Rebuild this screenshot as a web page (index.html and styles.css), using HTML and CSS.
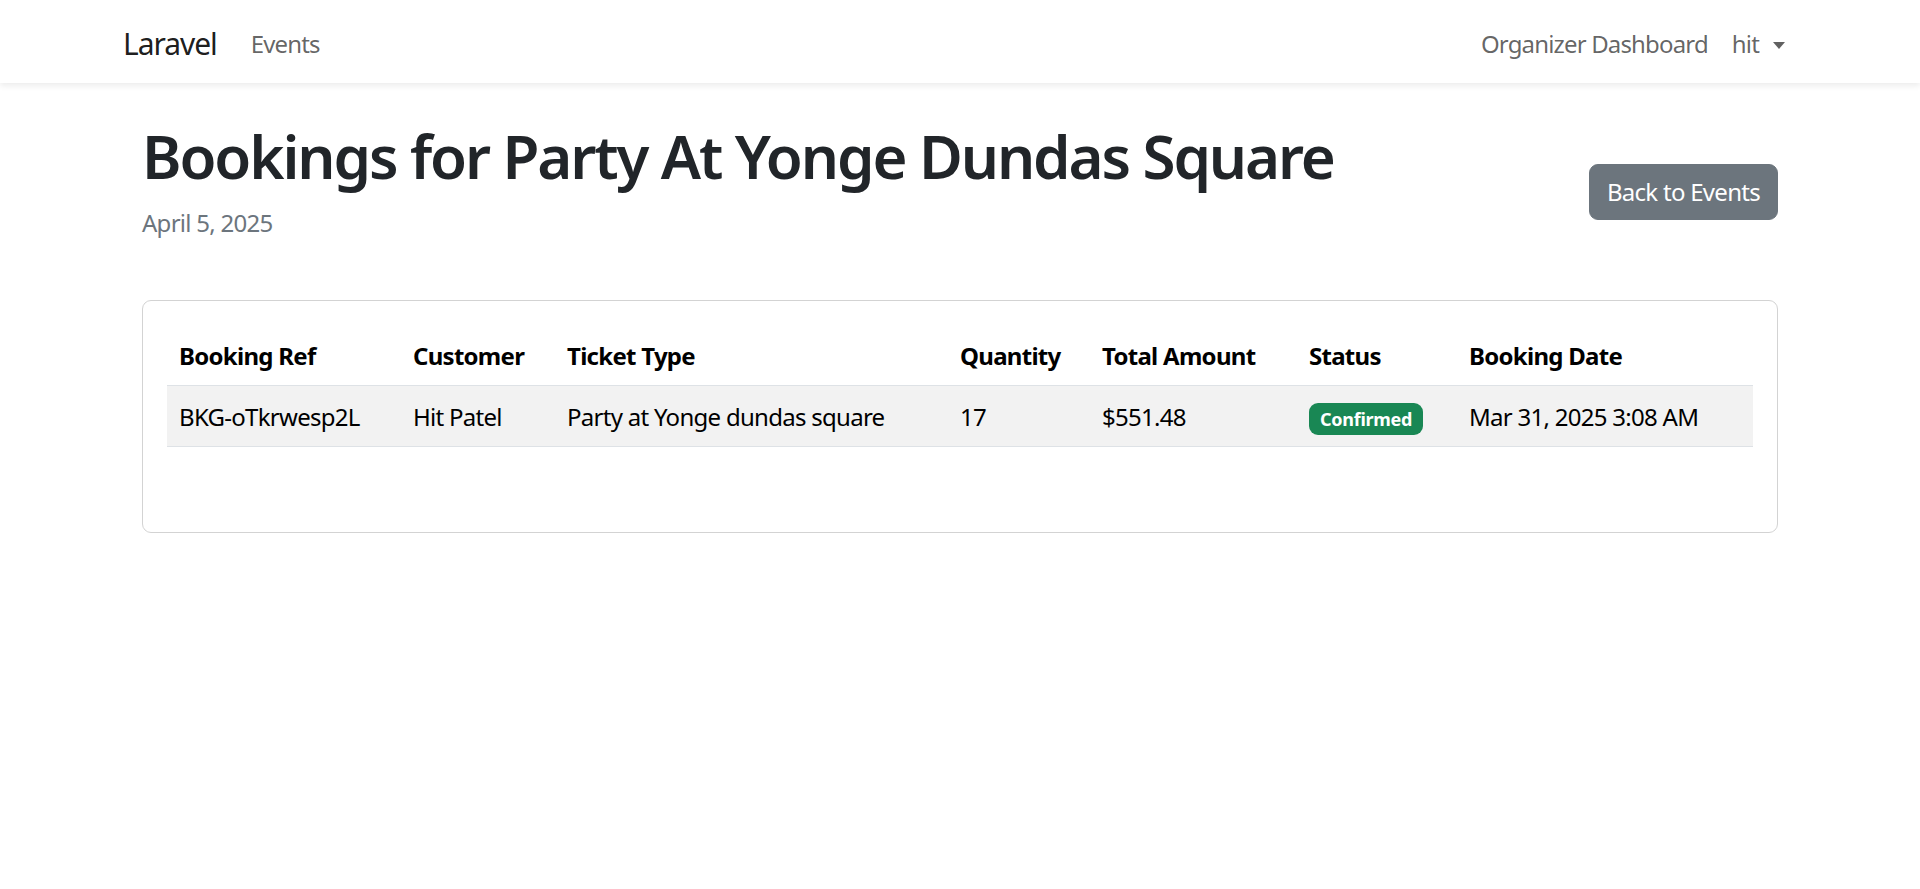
FILE: index.html
```html
<!DOCTYPE html>
<html lang="en">
<head>
<meta charset="utf-8">
<title>Bookings for Party At Yonge Dundas Square</title>
<link rel="stylesheet" href="styles.css">
</head>
<body>
<nav class="navbar">
  <div class="nav-container">
    <div class="nav-left">
      <a class="brand" href="#">Laravel</a>
      <a class="nav-link" href="#">Events</a>
    </div>
    <div class="nav-right">
      <a class="nav-link" href="#">Organizer Dashboard</a>
      <a class="nav-link dropdown-toggle" href="#">hit</a>
    </div>
  </div>
</nav>
<main class="main">
  <div class="page-head">
    <div class="title-block">
      <h1 class="title">Bookings for Party At Yonge Dundas Square</h1>
      <p class="subtitle">April 5, 2025</p>
    </div>
    <a class="btn-secondary" href="#">Back to Events</a>
  </div>
  <div class="card">
    <div class="card-body">
      <table class="table">
        <thead>
          <tr>
            <th class="c-ref">Booking Ref</th>
            <th class="c-cust">Customer</th>
            <th class="c-type">Ticket Type</th>
            <th class="c-qty">Quantity</th>
            <th class="c-amt">Total Amount</th>
            <th class="c-status">Status</th>
            <th class="c-date">Booking Date</th>
          </tr>
        </thead>
        <tbody>
          <tr class="striped">
            <td>BKG-oTkrwesp2L</td>
            <td>Hit Patel</td>
            <td>Party at Yonge dundas square</td>
            <td>17</td>
            <td>$551.48</td>
            <td><span class="badge">Confirmed</span></td>
            <td>Mar 31, 2025 3:08 AM</td>
          </tr>
        </tbody>
      </table>
    </div>
  </div>
</main>
</body>
</html>
```

FILE: styles.css
```css
* { box-sizing: border-box; }
html, body { margin: 0; padding: 0; }
body {
  font-family: "Noto Sans", "Open Sans", sans-serif;
  font-size: 24px;
  line-height: 1.5;
  color: #212529;
  background: #fff;
  letter-spacing: -0.03em;
}
a { text-decoration: none; }

.navbar {
  background: #fff;
  box-shadow: 0 3px 6px rgba(0, 0, 0, 0.075);
  padding: 14px 0 10px;
  height: 83px;
}
.nav-container {
  width: 1710px;
  margin: 0 auto;
  padding: 0 18px;
  display: flex;
  justify-content: space-between;
  align-items: center;
  height: 59px;
}
.nav-left, .nav-right { display: flex; align-items: center; }
.brand {
  font-size: 30px;
  color: rgba(0, 0, 0, 0.9);
  margin-right: 22px;
  line-height: 45px;
  letter-spacing: -0.035em;
}
.nav-link {
  color: rgba(0, 0, 0, 0.62);
  padding: 12px;
  line-height: 36px;
  letter-spacing: -0.035em;
}
.dropdown-toggle::after {
  content: "";
  display: inline-block;
  margin-left: 14px;
  vertical-align: 4px;
  border-top: 7px solid rgba(0, 0, 0, 0.62);
  border-left: 6.5px solid transparent;
  border-right: 6.5px solid transparent;
}

.main {
  width: 1710px;
  margin: 0 auto;
  padding: 37px 37px 0;
}
.page-head {
  display: flex;
  justify-content: space-between;
  align-items: center;
  margin-bottom: 36px;
}
.title {
  margin: 0 0 12px;
  font-size: 60px;
  font-weight: 600;
  line-height: 72px;
  color: #212529;
  letter-spacing: -0.035em;
}
.subtitle {
  margin: 0 0 23px;
  padding-top: 1px;
  color: #6c757d;
  line-height: 36px;
}
.btn-secondary {
  display: inline-block;
  background: #6c757d;
  color: #fff;
  border: 1px solid #6c757d;
  border-radius: 9px;
  padding: 9px 17px;
  line-height: 36px;
}

.card {
  border: 1px solid #d3d3d3;
  border-radius: 9px;
  background: #fff;
}
.card-body {
  padding: 24px 24px 61px;
}
.table {
  width: 100%;
  border-collapse: collapse;
  table-layout: fixed;
  color: #000;
  margin-bottom: 24px;
}
.table th, .table td {
  padding: 13px 12px 11px;
  text-align: left;
  border-bottom: 1px solid #dee2e6;
  line-height: 36px;
  white-space: nowrap;
  vertical-align: top;
}
.table th { font-weight: 700; }
.striped td { background: #f2f2f2; }
.c-ref { width: 234px; }
.c-cust { width: 154px; }
.c-type { width: 393px; }
.c-qty { width: 142px; }
.c-amt { width: 207px; }
.c-status { width: 160px; }
.c-date { width: 296px; }

.badge {
  display: inline-block;
  background: #198754;
  color: #fff;
  font-size: 18px;
  font-weight: 700;
  line-height: 1;
  padding: 7px 11px;
  border-radius: 9px;
  vertical-align: 0;
  letter-spacing: -0.015em;
}
```
